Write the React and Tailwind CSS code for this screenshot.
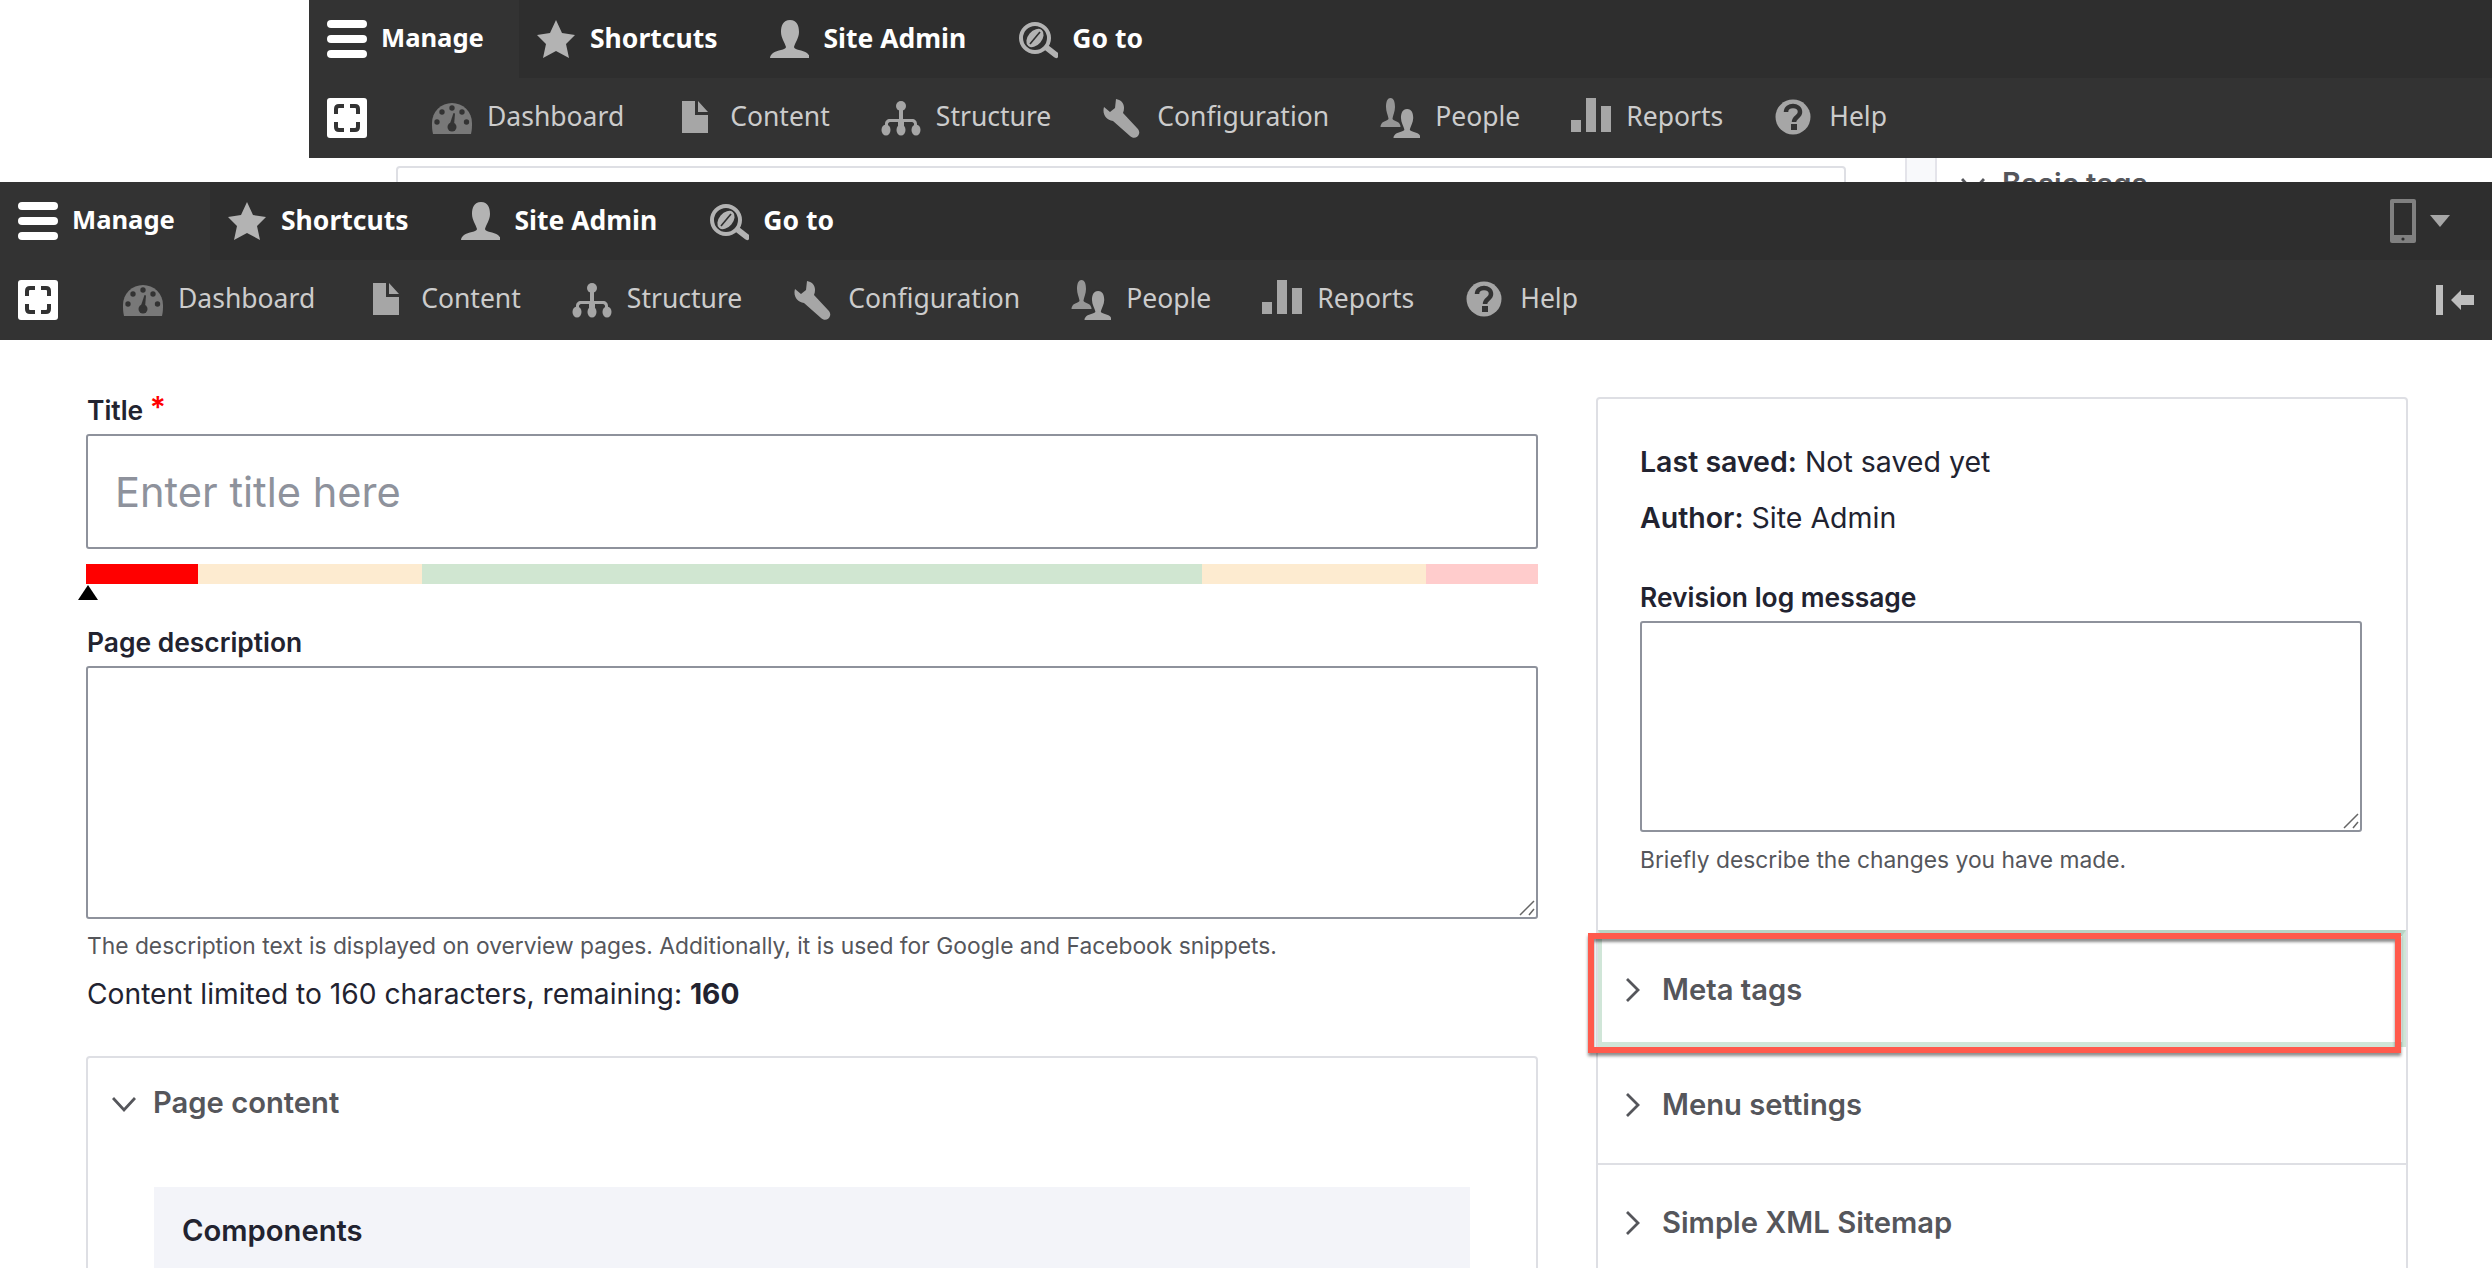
const PERSON =
  "M20 0c-7 0-9 6-9 12 0 6 4 11 5 15 0 3-9 3-13 6-2 2-3 3-3 5h40c0-2-1-3-3-5-4-3-13-3-13-6 1-4 5-9 5-15 0-6-2-12-9-12z";

function Icon({ children, className = "" }) {
  return (
    <svg viewBox="0 0 40 40" className={"w-10 h-10 shrink-0 " + className}>
      {children}
    </svg>
  );
}

const icons = {
  star: (
    <polygon
      fill="#b3b3b3"
      points="20,1 26,14 39,16 30,25 33,39 20,32 7,39 10,25 1,16 14,14"
    />
  ),
  person: <path fill="#b3b3b3" d={PERSON} transform="translate(1 1)" />,
  goto: (
    <g>
      <circle cx="17" cy="19" r="14" fill="none" stroke="#b3b3b3" strokeWidth="4" />
      <path d="M29 29l9 7" stroke="#b3b3b3" strokeWidth="6" strokeLinecap="round" />
      <ellipse cx="17" cy="19" rx="10.5" ry="7" transform="rotate(-50 17 19)" fill="#b3b3b3" />
      <path d="M12 25l10-12" stroke="#2e2e2e" strokeWidth="1.6" />
    </g>
  ),
  dashboard: (
    <g>
      <path fill="#787878" d="M1 36C0 32 0 28 0 25A20 20 0 0 1 40 25C40 28 40 32 39 36z" />
      <g fill="#333333">
        <circle cx="5" cy="24" r="2.7" />
        <circle cx="10" cy="14" r="2.7" />
        <circle cx="20" cy="10" r="2.7" />
        <circle cx="30" cy="14" r="2.7" />
        <circle cx="34.5" cy="24" r="2.7" />
        <circle cx="20" cy="29" r="4.5" />
        <path d="M17.5 27l4-12 1.5.5-1 12z" />
      </g>
    </g>
  ),
  content: <path fill="#a6a6a6" d="M7 3h13v14h13v18H7zM23 3l10 11H23z" />,
  structure: (
    <g fill="#a6a6a6">
      <circle cx="20" cy="8" r="5" />
      <rect x="18" y="8" width="4" height="14" />
      <path d="M4 32v-6c0-3 2-5 5-5h22c3 0 5 2 5 5v6h-3v-6c0-1-1-2-2-2H23v8h-6v-8H9c-1 0-2 1-2 2v6z" />
      <ellipse cx="5" cy="32" rx="4.5" ry="5.5" />
      <ellipse cx="20" cy="32" rx="4.5" ry="5.5" />
      <ellipse cx="35" cy="32" rx="4.5" ry="5.5" />
    </g>
  ),
  wrench: (
    <path
      fill="#a6a6a6"
      d="M14 1L13 10 8 14 2 9C0 16 4 22 11 23L28 38C31 41 36 40 37 36 38 33 36 31 35 30L21 15C24 7 20 2 14 1Z"
    />
  ),
  people: (
    <g>
      <path fill="#969696" d={PERSON} transform="translate(.5 0) scale(.5 .76)" />
      <path fill="#333333" d={PERSON} transform="translate(11.5 9) scale(.78 .86)" />
      <path fill="#a6a6a6" d={PERSON} transform="translate(13.5 11) scale(.68 .76)" />
    </g>
  ),
  reports: (
    <g fill="#a6a6a6">
      <rect x="0" y="22" width="10" height="12" />
      <rect x="15" y="0" width="10" height="34" />
      <rect x="30" y="8" width="10" height="26" />
    </g>
  ),
  help: (
    <g>
      <circle cx="19" cy="19" r="17.5" fill="#a6a6a6" />
      <path
        d="M12 14c0-8 14-8 14 0 0 5-6 5-6 10"
        fill="none"
        stroke="#333333"
        strokeWidth="4.5"
      />
      <rect x="17" y="26" width="6" height="6" fill="#333333" />
    </g>
  ),
};

function HeaderItem({ icon, label }) {
  return (
    <div className="flex items-center gap-[14px]">
      <Icon>{icons[icon]}</Icon>
      <span className="pb-[2px] text-[26.5px] font-bold text-white">{label}</span>
    </div>
  );
}

function TrayItem({ icon, label }) {
  return (
    <div className="flex items-center gap-[15px]">
      <Icon>{icons[icon]}</Icon>
      <span className="pb-[4px] text-[26.5px] text-[#cccccc]">{label}</span>
    </div>
  );
}

function Toolbar({ controls }) {
  return (
    <div className="font-['Noto_Sans',sans-serif] leading-none">
      <div className="flex h-[78px] items-center bg-[#2e2e2e]">
        <div className="flex h-full w-[210px] items-center gap-[14px] bg-[#333333] pl-[18px]">
          <div className="flex w-10 flex-col gap-[7px]">
            <div className="h-2 rounded-sm bg-white" />
            <div className="h-2 rounded-sm bg-white" />
            <div className="h-2 rounded-sm bg-white" />
          </div>
          <span className="pb-[2px] text-[25.6px] font-bold text-white">Manage</span>
        </div>
        <div className="flex items-center gap-[52px] pl-[17px]">
          <HeaderItem icon="star" label="Shortcuts" />
          <HeaderItem icon="person" label="Site Admin" />
          <HeaderItem icon="goto" label="Go to" />
        </div>
        {controls && (
          <div className="ml-auto flex items-center gap-[14px] pr-[42px]">
            <svg viewBox="0 0 26 44" className="h-11 w-[26px]">
              <rect width="26" height="44" rx="2" fill="#808080" />
              <rect x="4" y="4" width="18" height="32" fill="#2e2e2e" />
              <circle cx="13" cy="40" r="1.6" fill="#2e2e2e" />
            </svg>
            <div className="h-0 w-0 border-x-10 border-t-12 border-x-transparent border-t-[#a6a6a6]" />
          </div>
        )}
      </div>
      <div className="flex h-[80px] items-center bg-[#333333]">
        <div className="ml-[18px] flex h-10 w-10 shrink-0 items-center justify-center rounded-[3px] bg-white">
          <svg viewBox="0 0 40 40" className="h-10 w-10">
            <path
              d="M9 16v-5q0-3 3-3h5M23 8h5q3 0 3 3v5M31 24v5q0 3-3 3h-5M17 32h-5q-3 0-3-3v-5"
              fill="none"
              stroke="#333333"
              strokeWidth="4"
            />
          </svg>
        </div>
        <div className="ml-[65px] flex items-center gap-[51px]">
          <TrayItem icon="dashboard" label="Dashboard" />
          <TrayItem icon="content" label="Content" />
          <TrayItem icon="structure" label="Structure" />
          <TrayItem icon="wrench" label="Configuration" />
          <TrayItem icon="people" label="People" />
          <TrayItem icon="reports" label="Reports" />
          <TrayItem icon="help" label="Help" />
        </div>
        {controls && (
          <div className="ml-auto flex items-center gap-2 pr-[18px]">
            <div className="h-[30px] w-[7px] bg-[#bdbdbd]" />
            <svg viewBox="0 0 23 20" className="h-5 w-[23px]">
              <path d="M0 10L10 0v5h13v10H10v5z" fill="#bdbdbd" />
            </svg>
          </div>
        )}
      </div>
    </div>
  );
}

function Chevron({ open }) {
  return (
    <svg viewBox="0 0 24 24" className="h-6 w-6 shrink-0">
      <path
        d={open ? "M1 7l11 12L23 7" : "M6 1l11 11L6 23"}
        fill="none"
        stroke="#55565b"
        strokeWidth="2.8"
      />
    </svg>
  );
}

function Section({ title, className = "", children }) {
  return (
    <div className={"relative flex items-center gap-[17px] " + className}>
      <Chevron />
      <span className="text-[29.2px] font-semibold text-[#55565b]">{title}</span>
      {children}
    </div>
  );
}

function Textarea({ className = "" }) {
  return (
    <div className={"relative " + className}>
      <textarea className="block h-full w-full resize-none rounded-[3px] border-2 border-[#8e929c] outline-none" />
      <svg viewBox="0 0 16 16" className="absolute bottom-[3px] right-[3px] h-4 w-4">
        <path d="M1 15L15 1M10 15l5-6" stroke="#666666" strokeWidth="1.5" fill="none" />
      </svg>
    </div>
  );
}

export default function App() {
  return (
    <div className="h-screen overflow-hidden bg-white font-['Inter',sans-serif] text-[#222330]">
      {/* pasted crop of the page when scrolled */}
      <div className="ml-[309px]">
        <Toolbar />
        <div className="flex h-[24px] overflow-hidden">
          <div className="ml-[87px] mt-2 h-10 w-[1450px] rounded border-2 border-[#dedfe4]" />
          <div className="ml-[59px] h-10 w-[32px] border-x-2 border-[#e4e4ea] bg-[#f8f9fb]" />
          <div className="ml-[24px] mt-[6px] flex h-10 items-center gap-[17px]">
            <Chevron open />
            <span className="text-[29.2px] font-semibold leading-none text-[#55565b]">Basic tags</span>
          </div>
        </div>
      </div>

      <Toolbar controls />

      <div className="flex gap-[58px] px-[86px] pt-[52px]">
        {/* main column */}
        <div className="w-[1452px] shrink-0">
          <label className="mb-[5px] block pl-px text-[26.4px] font-semibold leading-[37px]">
            Title <span className="relative -top-[2px] text-[30px] leading-none text-[#ff0000]">*</span>
          </label>
          <input
            placeholder="Enter title here"
            className="block h-[115px] w-full rounded-[3px] border-2 border-[#8e929c] px-[27px] text-[41.6px] outline-none placeholder:text-[#8e929c]"
          />
          <div className="mt-[15px] flex h-5">
            <div className="w-[112px] bg-[#ff0000]" />
            <div className="w-[224px] bg-[#fdebd0]" />
            <div className="w-[780px] bg-[#d0e6d1]" />
            <div className="w-[224px] bg-[#fdebd0]" />
            <div className="w-[112px] bg-[#ffcccc]" />
          </div>
          <div className="mt-px ml-[-8px] h-0 w-0 border-x-10 border-b-[15px] border-x-transparent border-b-black" />
          <label className="mb-[5px] mt-[24px] block pl-px text-[26.4px] font-semibold leading-[37px]">
            Page description
          </label>
          <Textarea className="h-[253px]" />
          <p className="mt-[15px] pl-px text-[22.8px] leading-[24px] text-[#55565b]">
            The description text is displayed on overview pages. Additionally, it is used for Google and Facebook snippets.
          </p>
          <p className="mt-[18px] pl-px text-[28.2px] leading-[36px]">
            Content limited to 160 characters, remaining: <strong>160</strong>
          </p>
          <div className="mt-[44px] h-[400px] rounded border-2 border-[#dedfe4]">
            <div className="flex items-center gap-[17px] pl-[24px] pt-[25px]">
              <Chevron open />
              <span className="text-[29.2px] font-semibold leading-[40px] text-[#55565b]">Page content</span>
            </div>
            <div className="ml-[66px] mr-[66px] mt-[64px] h-[300px] bg-[#f3f4f9] pl-[28px] pt-[24px] text-[29.2px] font-semibold leading-[40px]">
              Components
            </div>
          </div>
        </div>

        {/* sidebar */}
        <div className="mt-[5px] h-[1000px] w-[812px] shrink-0 rounded border-2 border-[#dedfe4]">
          <div className="h-[531px] px-[42px] pt-[43px]">
            <p className="text-[28.5px] leading-[40px]">
              <strong className="font-semibold">Last saved:</strong> Not saved yet
            </p>
            <p className="mt-[16px] text-[28.5px] leading-[40px]">
              <strong className="font-semibold">Author:</strong> Site Admin
            </p>
            <label className="mb-[5px] mt-[41px] block text-[26.4px] font-semibold leading-[37px]">
              Revision log message
            </label>
            <Textarea className="h-[211px] w-[722px]" />
            <p className="mt-[16px] text-[22.8px] leading-[24px] text-[#55565b]">
              Briefly describe the changes you have made.
            </p>
          </div>
          <Section
            title="Meta tags"
            className="h-[117px] border-x-4 border-b-[5px] border-t-[6px] border-x-[#d0e6d8] border-b-[#d0e6d8] border-t-[#b8d4c6] pl-[19px] pt-[2px]"
          >
            {/* review annotation */}
            <div className="absolute -bottom-[11px] -left-[14px] -top-[3px] right-px border-[6px] border-[#ff5a4c] shadow-[0_3px_3px_rgba(0,0,0,0.45),inset_0_3px_3px_rgba(0,0,0,0.45)]" />
          </Section>
          <Section title="Menu settings" className="h-[118px] border-b-2 border-[#dedfe4] pl-[23px]" />
          <Section title="Simple XML Sitemap" className="h-[116px] pl-[23px]" />
        </div>
      </div>
    </div>
  );
}
